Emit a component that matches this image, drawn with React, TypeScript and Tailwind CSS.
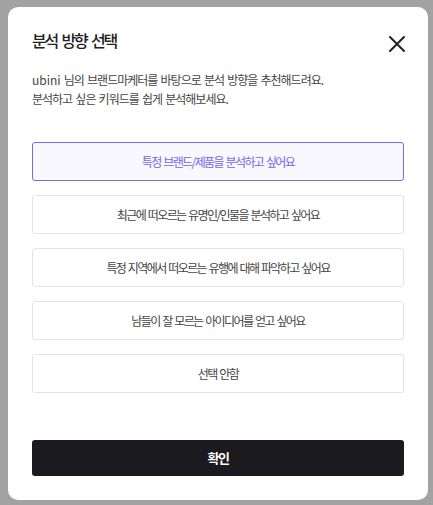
import { useState } from "react";

const options = [
  "특정 브랜드/제품을 분석하고 싶어요",
  "최근에 떠오르는 유명인/인물을 분석하고 싶어요",
  "특정 지역에서 떠오르는 유행에 대해 파악하고 싶어요",
  "남들이 잘 모르는 아이디어를 얻고 싶어요",
  "선택 안함",
];

export default function App() {
  const [selected, setSelected] = useState(0);

  return (
    <div
      className="h-[505px] w-[433px] overflow-hidden bg-[#a2a2a2] pl-[8px] pt-[7px]"
      style={{ fontFamily: '"Noto Sans CJK KR", "Noto Sans", sans-serif' }}
    >
      <div className="flex h-[493px] w-[420px] flex-col rounded-[10px] bg-white px-6 pt-[21px]">
        <div className="flex items-start justify-between">
          <h2 className="text-[16px] leading-6 font-medium tracking-[-2.2px] [word-spacing:3px] text-[#222]">분석 방향 선택</h2>
          <button className="mr-[-5px] mt-[4px] text-[#222]">
            <svg width="24" height="24" viewBox="0 0 24 24" fill="none" stroke="currentColor" strokeWidth="2" strokeLinecap="round">
              <path d="M5 5L19 19M19 5L5 19" />
            </svg>
          </button>
        </div>
        <p className="mt-[14px] text-[12px] leading-[19px] tracking-[-1px] [word-spacing:1.5px] text-[#444]">
          <span className="tracking-normal">ubini</span> 님의 브랜드마케터를 바탕으로 분석 방향을 추천해드려요.
          <br />
          분석하고 싶은 키워드를 쉽게 분석해보세요.
        </p>

        <div className="mt-[34px] flex flex-col gap-[14px]">
          {options.map((o, i) => (
            <button
              key={o}
              onClick={() => setSelected(i)}
              className={
                i === selected
                  ? "h-[39px] rounded-[3px] border border-[#7b68f0] bg-[#f9f8ff] text-[12px] tracking-[-1.6px] [word-spacing:1.5px] text-[#7464f2]"
                  : "h-[39px] rounded-[3px] border border-[#e4e4e4] bg-white text-[12px] tracking-[-1.6px] [word-spacing:1.5px] text-[#444]"
              }
            >
              {o}
            </button>
          ))}
        </div>

        <button className="mt-[47px] h-[36px] rounded-[3px] bg-[#1b1b1f] text-[13px] font-bold tracking-[-1.5px] text-white">
          확인
        </button>
      </div>
    </div>
  );
}
